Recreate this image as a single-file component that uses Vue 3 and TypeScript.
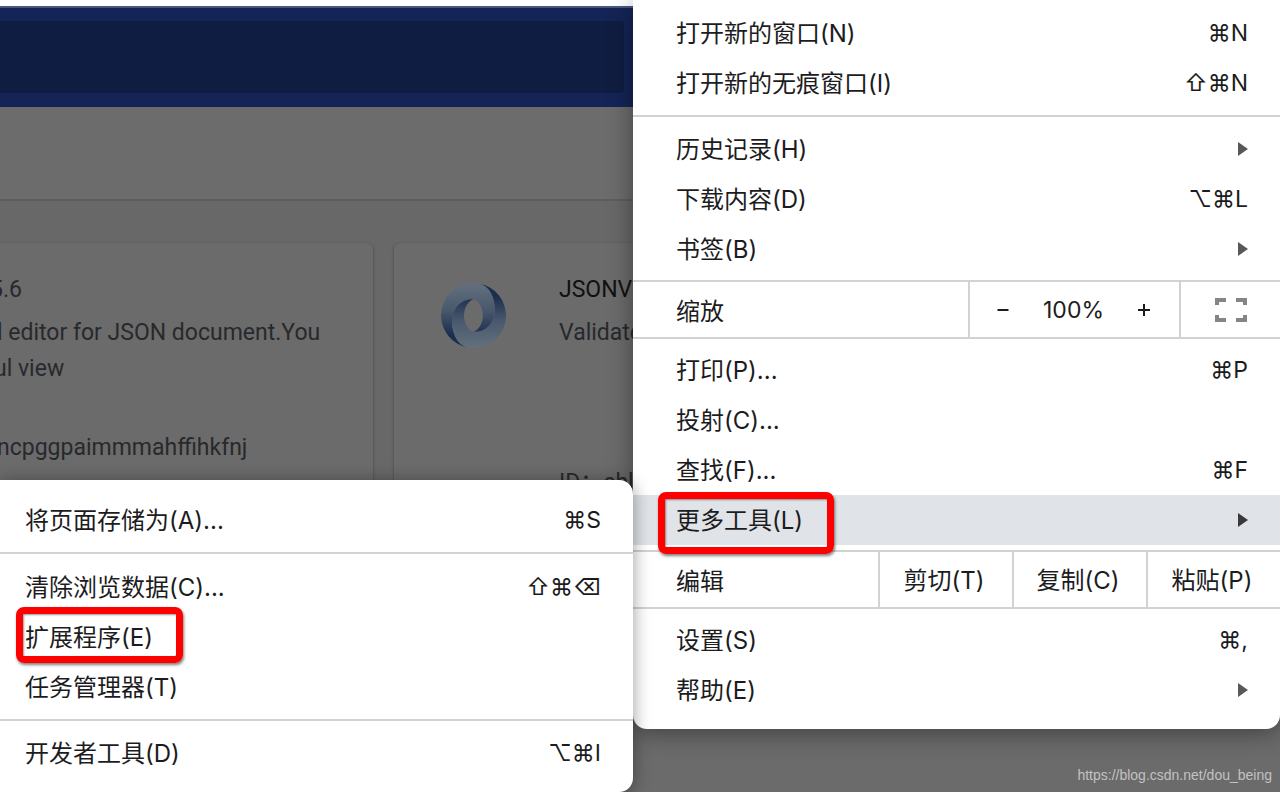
<script setup lang="ts">
interface Item {
  label: string
  keys?: string
  arrow?: boolean
  active?: boolean
  mark?: 'tools' | 'extensions'
}

const windowItems: Item[] = [
  { label: '打开新的窗口(N)', keys: '⌘N' },
  { label: '打开新的无痕窗口(I)', keys: '⇧⌘N' },
]
const libraryItems: Item[] = [
  { label: '历史记录(H)', arrow: true },
  { label: '下载内容(D)', keys: '⌥⌘L' },
  { label: '书签(B)', arrow: true },
]
const pageItems: Item[] = [
  { label: '打印(P)...', keys: '⌘P' },
  { label: '投射(C)...' },
  { label: '查找(F)...', keys: '⌘F' },
  { label: '更多工具(L)', arrow: true, active: true, mark: 'tools' },
]
const settingItems: Item[] = [
  { label: '设置(S)', keys: '⌘,' },
  { label: '帮助(E)', arrow: true },
]
const mainGroups = { windowItems, libraryItems, pageItems, settingItems }
const editActions: string[] = ['剪切(T)', '复制(C)', '粘贴(P)']

const toolGroups: Item[][] = [
  [{ label: '将页面存储为(A)...', keys: '⌘S' }],
  [
    { label: '清除浏览数据(C)...', keys: '⇧⌘⌫' },
    { label: '扩展程序(E)', mark: 'extensions' },
    { label: '任务管理器(T)' },
  ],
  [{ label: '开发者工具(D)', keys: '⌥⌘I' }],
]

// One half of the ring; the other half is the same shape turned by 180 degrees.
const halfRing =
  'M96,2C90,0.5 85,0 80,0A80,80 0 0 0 0,80A80,80 0 0 0 64,158C42,152 27,127 27,92C27,60 54,37 80,40C111,52 111,108 80,120C106,123 133,100 133,68C133,33 118,8 96,2Z'
</script>

<template>
  <div class="screen">
    <main class="page">
      <div class="toolbar"><div class="search"></div></div>
      <div class="subbar"></div>
      <div class="cards">
        <article class="card first">
          <p class="version">5.6</p>
          <p class="desc">
            <span class="line-one">l editor for JSON document.You</span>
            <span class="line-two">ul view</span>
          </p>
          <p class="ident">ncpggpaimmmahffihkfnj</p>
        </article>
        <article class="card second">
          <svg class="logo" viewBox="0 0 160 160" aria-hidden="true">
            <defs>
              <linearGradient id="fall" gradientUnits="userSpaceOnUse" x1="60" y1="0" x2="60" y2="150">
                <stop offset="0" stop-color="#64707e" />
                <stop offset="0.45" stop-color="#48586d" />
                <stop offset="0.85" stop-color="#1c2e4d" />
              </linearGradient>
            </defs>
            <path fill="url(#fall)" :d="halfRing" />
            <path fill="url(#fall)" :d="halfRing" transform="rotate(180 80 80)" />
          </svg>
          <div class="info">
            <p class="version name">JSONV</p>
            <p class="desc"><span>Validate</span></p>
            <p class="ident">ID：chl</p>
          </div>
        </article>
      </div>
    </main>

    <div class="menus">
      <nav class="menu tools-menu">
        <div v-for="(group, g) in toolGroups" :key="g" class="group">
          <button v-for="item in group" :key="item.label" type="button" class="item">
            <span class="label">{{ item.label }}</span>
            <kbd v-if="item.keys">{{ item.keys }}</kbd>
            <i v-if="item.mark" class="mark" :class="item.mark"></i>
          </button>
        </div>
      </nav>

      <nav class="menu main-menu">
        <template v-for="(group, name) in mainGroups" :key="name">
          <div v-if="name === 'pageItems'" class="strip">
            <span class="strip-label">缩放</span>
            <div class="zoom">
              <button type="button" class="step" aria-label="缩小">
                <svg width="12" height="12" viewBox="0 0 12 12"><path d="M0.5 6H11.5" /></svg>
              </button>
              <span class="level">100%</span>
              <button type="button" class="step" aria-label="放大">
                <svg width="12" height="12" viewBox="0 0 12 12"><path d="M0 6H12M6 0V12" /></svg>
              </button>
            </div>
            <button type="button" class="full" aria-label="全屏">
              <svg width="34" height="26" viewBox="0 0 34 26">
                <path d="M3 8V3H12M22 3H31V8M31 18V23H22M12 23H3V18" />
              </svg>
            </button>
          </div>
          <div v-if="name === 'settingItems'" class="strip">
            <span class="strip-label">编辑</span>
            <button v-for="action in editActions" :key="action" type="button" class="action">
              {{ action }}
            </button>
          </div>
          <div class="group" :class="name">
            <button
              v-for="item in group"
              :key="item.label"
              type="button"
              class="item"
              :class="{ active: item.active }"
            >
              <span class="label">{{ item.label }}</span>
              <kbd v-if="item.keys">{{ item.keys }}</kbd>
              <svg v-if="item.arrow" class="arrow" width="10" height="14" viewBox="0 0 10 14">
                <path d="M0 0L10 7L0 14Z" />
              </svg>
              <i v-if="item.mark" class="mark" :class="item.mark"></i>
            </button>
          </div>
        </template>
      </nav>
    </div>

    <a class="credit" href="https://blog.csdn.net/dou_being">https://blog.csdn.net/dou_being</a>
  </div>
</template>

<style>
body {
  margin: 0;
}
</style>

<style scoped>
.screen {
  position: relative;
  min-height: 100vh;
  overflow: hidden;
  background: #686868;
  font-family: Inter, "Noto Sans CJK SC", sans-serif;
  font-size: 24px;
  color: #1c1c1e;
}

.page {
  position: absolute;
  inset: 0;
  display: flex;
  flex-direction: column;
  border-top: 6px solid #fff;
  font-family: Roboto, "Noto Sans CJK SC", sans-serif;
  font-size: 23px;
  color: #28292c;
}

.toolbar {
  padding: 13px 0 14px;
  border-top: 2px solid #4b557a;
  background: #142456;
}

.search {
  width: calc(49% - 3px);
  height: 72px;
  box-sizing: border-box;
  border-radius: 0 4px 4px 0;
  background: #101d42;
}

.subbar {
  height: 92px;
  border-bottom: 2px solid #5d5d5d;
  background: #6c6c6c;
}

.cards {
  flex: 1;
  display: grid;
  grid-template-columns: 373px 1fr;
  column-gap: 21px;
  padding-top: 42px;
}

.card {
  background: #6b6b6b;
  box-shadow: 0 1px 3px rgba(0, 0, 0, 0.35);
  white-space: nowrap;
}

.first {
  border-radius: 0 6px 6px 0;
}

.second {
  display: flex;
  gap: 53px;
  padding-left: 47px;
  border-radius: 6px 0 0 6px;
}

.logo {
  width: 65px;
  height: 65px;
  margin-top: 40px;
}

.card p {
  margin: 0;
}

.card .version {
  padding-top: 29px;
  line-height: 36px;
  text-indent: -10px;
}

.card .name {
  color: #101011;
}

.desc {
  height: 108px;
  padding-top: 7px;
}

.desc span {
  display: block;
  line-height: 36px;
}

.line-one {
  text-indent: -3px;
}

.line-two {
  text-indent: -6px;
}

.ident {
  padding-top: 7px;
  line-height: 36px;
  text-indent: -3px;
}

.info .version,
.info .ident {
  text-indent: 0;
}

.info .ident {
  padding-top: 42px;
}

.menus {
  position: absolute;
  inset: 0;
  display: grid;
  grid-template-columns: 633fr 647fr;
}

.menu {
  background: #fff;
}

.main-menu {
  align-self: start;
  border-radius: 0 0 14px 14px;
  box-shadow: 0 4px 24px rgba(0, 0, 0, 0.4);
}

.tools-menu {
  position: relative;
  z-index: 1;
  align-self: end;
  border-radius: 0 14px 14px 0;
  box-shadow: 0 2px 18px rgba(0, 0, 0, 0.4);
}

.group {
  padding: 7px 0;
}

.group + .group {
  border-top: 2px solid #d2d2d2;
}

.tools-menu .group:first-child {
  padding-top: 15px;
}

.tools-menu .group:last-child {
  padding-bottom: 14px;
}

.tools-menu .group:nth-child(2) {
  padding-top: 8px;
}

.main-menu .group:last-child {
  padding-bottom: 14px;
}

.windowItems {
  padding-top: 8px;
}

.libraryItems {
  padding-bottom: 6px;
}

.pageItems {
  padding: 6px 0 5px;
}

.settingItems {
  padding-top: 6px;
}

button {
  margin: 0;
  padding: 0;
  border: 0;
  background: none;
  font: inherit;
  color: inherit;
}

.item {
  position: relative;
  display: flex;
  align-items: center;
  justify-content: space-between;
  width: 100%;
  height: 50px;
  padding: 0 32px 0 43px;
  text-align: left;
  white-space: nowrap;
}

.label {
  padding-bottom: 4px;
}

.tools-menu .item {
  padding-left: 25px;
}

.active {
  background: #e0e3e7;
}

kbd {
  font-family: inherit;
  font-size: 23px;
}

.arrow {
  fill: #58585a;
}

.active .arrow {
  fill: #39393b;
}

.mark {
  position: absolute;
  box-sizing: border-box;
  border: 7px solid #fe0000;
  border-radius: 8px;
  box-shadow: 1px 2px 3px rgba(0, 0, 0, 0.5), inset 1px 1px 2px rgba(0, 0, 0, 0.4);
}

.mark.tools {
  top: -3px;
  left: 25px;
  width: 176px;
  height: 62px;
}

.mark.extensions {
  top: -5px;
  left: 16px;
  width: 167px;
  height: 56px;
}

.strip {
  display: flex;
  align-items: stretch;
  height: 55px;
  border-top: 2px solid #d2d2d2;
  border-bottom: 2px solid #d2d2d2;
}

.strip-label {
  flex: 1;
  display: flex;
  align-items: center;
  padding-left: 43px;
}

.zoom {
  display: flex;
  align-items: center;
  justify-content: space-between;
  width: 153px;
  padding: 0 29px 0 27px;
  border-left: 2px solid #d2d2d2;
}

.level {
  font-size: 23px;
}

.step {
  display: flex;
}

.step path {
  fill: none;
  stroke: #1c1c1e;
  stroke-width: 2;
}

.full {
  display: flex;
  align-items: center;
  justify-content: center;
  width: 101px;
  border-left: 2px solid #d2d2d2;
}

.full path {
  fill: none;
  stroke: #858585;
  stroke-width: 4;
}

.action {
  width: 134px;
  padding: 0 4px 2px 0;
  border-left: 2px solid #d2d2d2;
}

.credit {
  position: absolute;
  right: 8px;
  bottom: 8px;
  font-family: "Liberation Sans", sans-serif;
  font-size: 14px;
  line-height: 18px;
  color: #c2c2c2;
  text-decoration: none;
}
</style>
